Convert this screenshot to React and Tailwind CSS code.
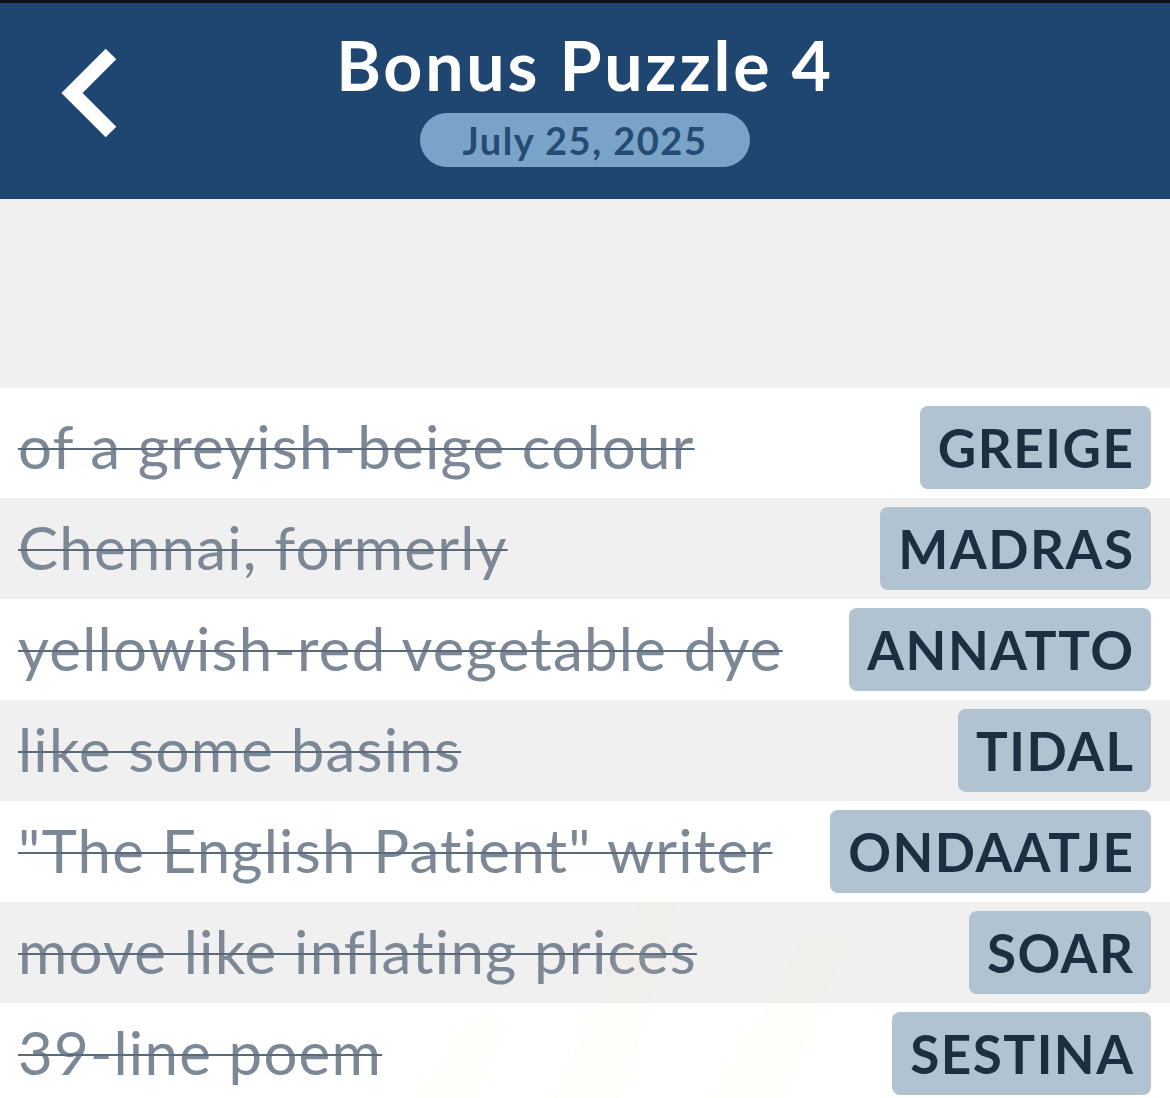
import React from "react";

const clues = [
  { clue: "of a greyish-beige colour", answer: "GREIGE" },
  { clue: "Chennai, formerly", answer: "MADRAS" },
  { clue: "yellowish-red vegetable dye", answer: "ANNATTO" },
  { clue: "like some basins", answer: "TIDAL" },
  { clue: "\"The English Patient\" writer", answer: "ONDAATJE" },
  { clue: "move like inflating prices", answer: "SOAR" },
  { clue: "39-line poem", answer: "SESTINA" },
];

const App = () => {
  return (
    <div
      className="w-[1170px] h-[1098px] overflow-hidden bg-[#f0f0f0] relative"
      style={{ fontFamily: "Lato, 'Open Sans', sans-serif" }}
    >
      {/* Header */}
      <div className="h-[3px] bg-[#111]" />
      <div className="h-[196px] bg-[#1e4670] relative flex flex-col items-center">
        {/* back chevron */}
        <svg className="absolute left-0 top-0" width="140" height="196" viewBox="0 0 140 196">
          <path
            d="M111 51 L72 90 L111 129"
            fill="none"
            stroke="#fff"
            strokeWidth="15"
            strokeLinejoin="miter"
            strokeLinecap="butt"
          />
        </svg>
        <h1 className="mt-[21px] text-[68px] leading-[82px] font-bold text-white tracking-[2.8px]">
          Bonus Puzzle 4
        </h1>
        <div className="mt-[7px] w-[330px] h-[54px] rounded-full bg-[#7aa3c8] flex items-center justify-center">
          <span className="text-[38px] font-bold text-[#244b73] leading-none tracking-[1.5px]">
            July 25, 2025
          </span>
        </div>
      </div>

      {/* Empty area */}
      <div className="h-[189px]" />

      {/* Clue list */}
      <div className="bg-white pt-[9px] relative">
        {clues.map((item, index) => (
          <div
            key={item.answer}
            className={`h-[101px] flex items-center justify-between pl-[18px] pr-[19px] ${
              index % 2 === 1 ? "bg-[#f0f0f0]" : "bg-white"
            }`}
          >
            <span className="-mt-[4px] text-[60px] text-[#7d8896] line-through decoration-[#5a6a7b] decoration-[2px] leading-none whitespace-nowrap tracking-[1.2px]">
              {item.clue}
            </span>
            <span className="h-[83px] pl-[18px] pr-[16.5px] rounded-[8px] bg-[#b1c3d1] flex items-center text-[53px] font-bold text-[#1c2e40] leading-none tracking-[1.5px]">
              {item.answer}
            </span>
          </div>
        ))}

        {/* faint watermark */}
        <svg
          className="absolute left-[380px] top-[490px] pointer-events-none"
          width="520"
          height="230"
          viewBox="0 0 520 230"
        >
          <polygon points="170,230 260,20 300,20 240,230" fill="#ffe9a8" opacity="0.07" />
          <polygon points="330,230 420,60 470,60 400,230" fill="#ffe9a8" opacity="0.07" />
          <polygon points="30,230 90,140 130,140 90,230" fill="#ffe9a8" opacity="0.06" />
        </svg>
      </div>
    </div>
  );
};

export default App;
